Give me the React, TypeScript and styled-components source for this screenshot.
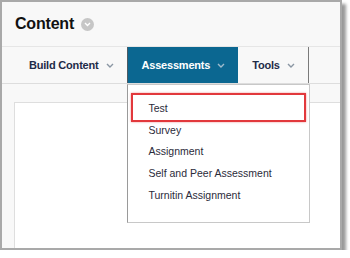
import React from 'react';
import styled, { createGlobalStyle } from 'styled-components';

const GlobalStyle = createGlobalStyle`
  html, body {
    margin: 0;
    padding: 0;
    background: #ffffff;
  }
  body {
    font-family: "Liberation Sans", Arial, sans-serif;
  }
`;

const Frame = styled.div`
  box-sizing: border-box;
  width: 342px;
  height: 250px;
  border: 2px solid #a9a9a9;
  background: #f8f8f8;
  box-shadow: 4px 4px 3px rgba(0, 0, 0, 0.4);
  overflow: hidden;
  display: flex;
  flex-direction: column;
`;

const Header = styled.div`
  height: 44px;
  flex-shrink: 0;
  display: flex;
  align-items: center;
  gap: 7px;
  padding: 0 0 0 13px;
  border-bottom: 1px solid #e6e6e6;
`;

const Title = styled.h1`
  margin: 0;
  font-size: 16px;
  font-weight: bold;
  color: #111111;
  letter-spacing: -0.2px;
`;

const CircleIcon = styled.span`
  width: 13px;
  height: 13px;
  border-radius: 50%;
  background: #c6c6c6;
  display: inline-flex;
  align-items: center;
  justify-content: center;
  margin-top: 1px;
`;

const TabBar = styled.div`
  height: 36px;
  flex-shrink: 0;
  display: flex;
  padding-left: 13px;
  border-bottom: 1px solid #dddddd;
`;

const TabWrap = styled.div<{ $active?: boolean; $last?: boolean }>`
  position: relative;
  display: flex;
  border-left: ${({ $active }) => ($active ? '1px solid #4d5a63' : 'none')};
  border-right: ${({ $last }) => ($last ? '1px solid #7a7a7a' : 'none')};
`;

const Tab = styled.div<{ $active?: boolean }>`
  display: flex;
  align-items: center;
  gap: 7px;
  padding: 0 13px 0 14px;
  background: ${({ $active }) => ($active ? '#0b6791' : 'transparent')};
  color: ${({ $active }) => ($active ? '#ffffff' : '#1e2b48')};
  font-size: 11px;
  font-weight: bold;
  letter-spacing: -0.2px;
  white-space: nowrap;
`;

const Content = styled.div`
  flex: 1;
  padding: 18px 0 0 12px;
  display: flex;
`;

const Panel = styled.div`
  flex: 1;
  background: #ffffff;
  border-top: 1px solid #dedede;
  border-left: 1px solid #dedede;
`;

const Dropdown = styled.div`
  position: absolute;
  top: 100%;
  left: -1px;
  width: 183px;
  height: 139px;
  box-sizing: border-box;
  margin-top: 1px;
  background: #ffffff;
  border: 1px solid #c8c8c8;
  border-left-color: #9a9a9a;
  padding: 13px 0 0 21px;
  z-index: 2;
`;

const MenuList = styled.ul`
  list-style: none;
  margin: 0;
  padding: 0;
`;

const MenuItem = styled.li`
  font-size: 10.5px;
  line-height: 21.7px;
  color: #2b2b3a;
  white-space: nowrap;
`;

const Highlight = styled.div`
  position: absolute;
  left: 3px;
  top: 8px;
  width: 175px;
  height: 29px;
  box-sizing: border-box;
  border: 2px solid #e2383c;
  box-shadow: 0 0 2px rgba(226, 56, 60, 0.55);
`;

const Chevron = ({ color }: { color: string }) => (
  <svg width="8" height="5" viewBox="0 0 8 5">
    <polyline points="1,1 4,4 7,1" fill="none" stroke={color} strokeWidth="1.4" />
  </svg>
);

const tabs = [
  { label: 'Build Content' },
  { label: 'Assessments', active: true },
  { label: 'Tools', last: true },
];

const items = ['Test', 'Survey', 'Assignment', 'Self and Peer Assessment', 'Turnitin Assignment'];

export default function App() {
  return (
    <>
      <GlobalStyle />
      <Frame>
        <Header>
          <Title>Content</Title>
          <CircleIcon>
            <svg width="7" height="5" viewBox="0 0 7 5">
              <polyline points="1,1 3.5,3.5 6,1" fill="none" stroke="#ffffff" strokeWidth="1.4" />
            </svg>
          </CircleIcon>
        </Header>
        <TabBar>
          {tabs.map((t) => (
            <TabWrap key={t.label} $active={t.active} $last={t.last}>
              <Tab $active={t.active}>
                {t.label}
                <Chevron color={t.active ? '#9fbccd' : '#8a96a3'} />
              </Tab>
              {t.active && (
                <Dropdown>
                  <MenuList>
                    {items.map((i) => (
                      <MenuItem key={i}>{i}</MenuItem>
                    ))}
                  </MenuList>
                  <Highlight />
                </Dropdown>
              )}
            </TabWrap>
          ))}
        </TabBar>
        <Content>
          <Panel />
        </Content>
      </Frame>
    </>
  );
}
